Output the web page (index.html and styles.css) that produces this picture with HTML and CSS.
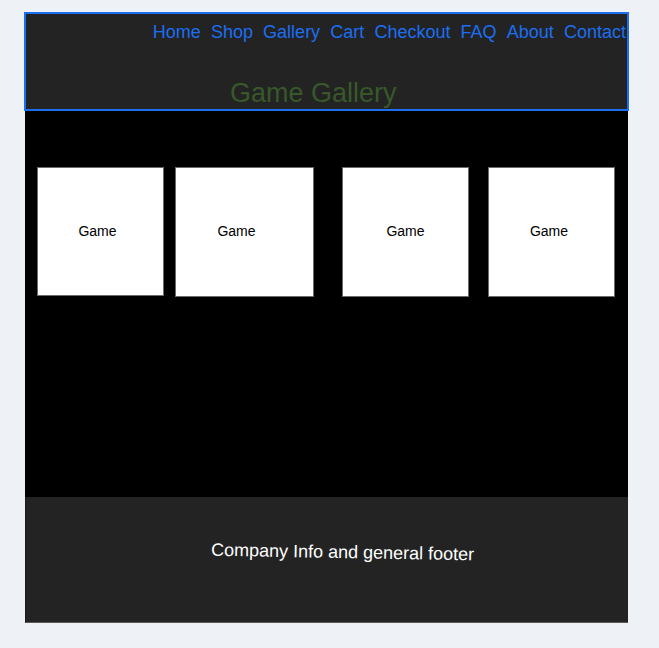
FILE: index.html
```html
<!DOCTYPE html>
<html lang="en">
<head>
<meta charset="utf-8">
<title>Game Gallery</title>
<link rel="stylesheet" href="styles.css">
</head>
<body>
<div class="page">
  <header class="site-header">
    <nav class="nav">
      <a href="#">Home</a>
      <a href="#">Shop</a>
      <a href="#">Gallery</a>
      <a href="#">Cart</a>
      <a href="#">Checkout</a>
      <a href="#">FAQ</a>
      <a href="#">About</a>
      <a href="#">Contact</a>
    </nav>
    <h1 class="title">Game Gallery</h1>
  </header>
  <main class="gallery">
    <div class="card card-a">Game</div>
    <div class="card card-b">Game</div>
    <div class="card card-c">Game</div>
    <div class="card card-d">Game</div>
  </main>
  <footer class="site-footer">
    <p class="footer-text">Company Info and general footer</p>
  </footer>
</div>
</body>
</html>
```

FILE: styles.css
```css
html, body {
  margin: 0;
  padding: 0;
}
body {
  background: #eef1f6;
  font-family: "Liberation Sans", Arial, sans-serif;
}
.page {
  width: 605px;
  margin: 12px 0 0 24px;
}
.site-header {
  background: #232323;
  border: 2px solid #1c6ef2;
  height: 95px;
  display: flex;
  flex-direction: column;
}
.nav {
  display: flex;
  justify-content: flex-end;
  gap: 10.15px;
  padding: 8px 1px 0 0;
  font-size: 18px;
}
.nav a {
  color: #1c6ef2;
  text-decoration: none;
}
.title {
  margin: 35px 0 0 0;
  padding-left: 204px;
  font-size: 27px;
  font-weight: normal;
  color: #37592a;
  line-height: normal;
}
.gallery {
  margin: 0 1px;
  background: #000;
  height: 386px;
  box-sizing: border-box;
  padding: 56px 0 0 12px;
  display: flex;
  align-items: flex-start;
}
.card {
  background: #fff;
  border: 1px solid #6a6a6a;
  box-sizing: border-box;
  width: 127px;
  height: 130px;
  display: flex;
  align-items: center;
  justify-content: center;
  padding-bottom: 2px;
  font-size: 14px;
  color: #000;
}
.card-a {
  height: 129px;
  padding-right: 6px;
}
.card-b {
  width: 139px;
  margin-left: 11px;
  padding-right: 16px;
}
.card-c {
  margin-left: 28px;
}
.card-d {
  margin-left: 19px;
  padding-right: 5px;
}
.site-footer {
  margin: 0 1px;
  background: #232323;
  height: 126px;
  box-sizing: border-box;
  border-bottom: 1px solid #5a5a5a;
  border-left: 1px solid #1a1a1a;
  display: flex;
  align-items: center;
  justify-content: center;
  padding: 0 0 14px 32px;
}
.footer-text {
  margin: 0;
  color: #fff;
  font-size: 18px;
  transform: rotate(1deg);
}
```
